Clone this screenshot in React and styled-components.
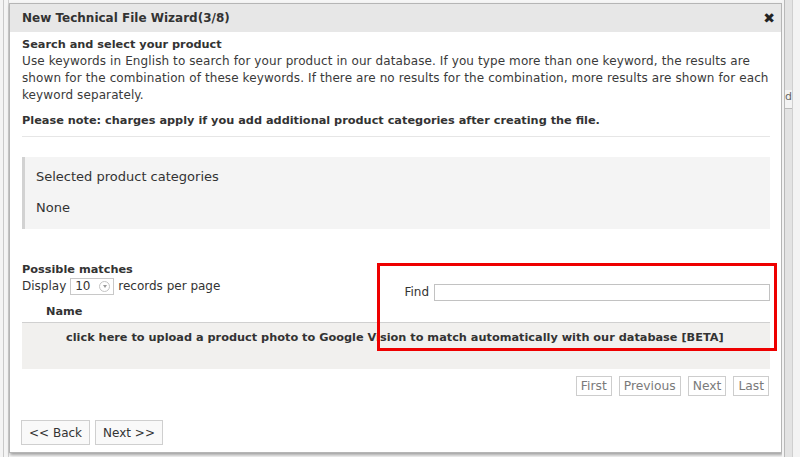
import React from "react";
import styled, { createGlobalStyle } from "styled-components";

const GlobalStyle = createGlobalStyle`
  html, body {
    margin: 0;
    padding: 0;
    background: #f5f5f5;
    font-family: "DejaVu Sans", Verdana, sans-serif;
    color: #333;
  }
`;

const Screen = styled.div`
  width: 800px;
  height: 457px;
  display: flex;
  overflow: hidden;
  background: #f6f6f6;
`;

const LeftEdge = styled.div`
  width: 9px;
  flex-shrink: 0;
  border-right: 1px solid #d0d0d0;
  box-sizing: border-box;
  background: linear-gradient(to right, #f4f4f4 0 3px, #c9c9c9 3px 4px, #f4f4f4 4px);
`;

const RightEdge = styled.div`
  flex: 1;
  display: flex;
  flex-direction: column;
  padding-left: 2px;
  background: #f3f3f3;
`;

const Track = styled.div`
  width: 7px;
  flex: 1;
  background: #e3e3e3;
  border-left: 1px solid #b9b9b9;
  border-right: 1px solid #cfcfcf;
  font-size: 11px;
  color: #666;
  display: flex;
  flex-direction: column;
  align-items: flex-start;
`;

const TrackLetter = styled.span`
  margin-top: 90px;
  padding-bottom: 5px;
  border-bottom: 1px solid #bbb;
  width: 100%;
  background: #f3f3f3;
`;

const Dialog = styled.div`
  width: 773px;
  height: 450px;
  margin-top: 3px;
  flex-shrink: 0;
  background: #fff;
  border: 1px solid #b5b5b5;
  box-sizing: border-box;
  box-shadow: 1px 2px 3px rgba(0, 0, 0, 0.35);
  display: flex;
  flex-direction: column;
`;

const TitleBar = styled.div`
  height: 28px;
  background: #e7e7e7;
  display: flex;
  align-items: center;
  justify-content: space-between;
  padding: 0 6px 0 12px;
  font-size: 12px;
  font-weight: bold;
  color: #333;
`;

const Close = styled.span`
  font-size: 14px;
  color: #222;
`;

const Body = styled.div`
  flex: 1;
  padding: 0 11px 0 12px;
  display: flex;
  flex-direction: column;
  font-size: 12px;
  line-height: 17px;
`;

const Heading = styled.div`
  font-weight: bold;
  font-size: 11.3px;
  margin-top: 4px;
`;

const Intro = styled.p`
  margin: 0 -14px 0 0;
  font-size: 12px;
  letter-spacing: 0.1px;
  color: #3a3a3a;
`;

const Note = styled.p`
  margin: 8px 0 0;
  font-weight: bold;
  font-size: 11.3px;
  padding-bottom: 7px;
  border-bottom: 1px solid #e6e6e6;
`;

const Panel = styled.div`
  margin-top: 20px;
  background: #f4f4f4;
  border-left: 3px solid #d2d2d2;
  padding: 11px 11px 13px;
  display: flex;
  flex-direction: column;
  gap: 14px;
  font-size: 13px;
  color: #333;
`;

const Matches = styled.div`
  margin-top: 32px;
  display: flex;
  align-items: flex-start;
`;

const LengthCol = styled.div`
  flex: 1;
  display: flex;
  flex-direction: column;
`;

const SubHeading = styled.div`
  font-weight: bold;
  font-size: 11.3px;
`;

const Display = styled.div`
  display: flex;
  align-items: center;
  gap: 4px;
`;

const Select = styled.span`
  width: 44px;
  height: 17px;
  box-sizing: border-box;
  border: 1px solid #c8c8c8;
  display: flex;
  align-items: center;
  justify-content: space-between;
  padding: 0 3px 0 4px;
  font-size: 12px;
`;

const Caret = styled.span`
  width: 11px;
  height: 11px;
  border-radius: 50%;
  border: 1px solid #c4c4c4;
  box-sizing: border-box;
  display: flex;
  align-items: center;
  justify-content: center;
  &::after {
    content: "";
    border-left: 2.5px solid transparent;
    border-right: 2.5px solid transparent;
    border-top: 3px solid #999;
  }
`;

const FindCol = styled.label`
  width: 367px;
  margin-top: 23px;
  display: flex;
  align-items: center;
  gap: 5px;
  padding-left: 4px;
  justify-content: flex-end;
`;

const FindInput = styled.input`
  width: 336px;
  height: 17px;
  box-sizing: border-box;
  border: 1px solid #c2c2c2;
  margin: 0;
`;

const Table = styled.div`
  margin-top: -2px;
  display: flex;
  flex-direction: column;
`;

const HeadRow = styled.div`
  font-weight: bold;
  font-size: 11.3px;
  padding: 4px 0 2px 24px;
  border-bottom: 1px solid #d0d0d0;
`;

const UploadRow = styled.div`
  background: #f1f0ee;
  height: 46px;
  padding: 6px 0 0 44px;
  box-sizing: border-box;
  font-weight: bold;
  font-size: 11.3px;
  color: #333;
`;

const Pager = styled.div`
  margin-top: 7px;
  display: flex;
  justify-content: flex-end;
  gap: 7px;
  padding-right: 1px;
`;

const PageButton = styled.span`
  border: 1px solid #cdcdcd;
  padding: 1px 4px;
  color: #7a7a7a;
  font-size: 12.3px;
  line-height: 16px;
  background: #fff;
`;

const Footer = styled.div`
  margin-top: 24px;
  display: flex;
  gap: 5px;
  margin-left: -1px;
`;

const FooterButton = styled.button`
  height: 25px;
  padding: 0 7px;
  border: 1px solid #cfcfcf;
  background: #f9f9f9;
  font-family: "DejaVu Sans", Verdana, sans-serif;
  font-size: 12px;
  color: #333;
  border-radius: 0;
`;

const Highlight = styled.div`
  position: absolute;
  left: 377px;
  top: 263px;
  width: 400px;
  height: 88px;
  box-sizing: border-box;
  border: 3px solid #ee0000;
  pointer-events: none;
`;

const Frame = styled.div`
  position: relative;
`;

export default function App() {
  return (
    <Frame>
      <GlobalStyle />
      <Screen>
        <LeftEdge />
        <Dialog>
          <TitleBar>
            New Technical File Wizard(3/8)
            <Close>✖</Close>
          </TitleBar>
          <Body>
            <Heading>Search and select your product</Heading>
            <Intro>
              Use keywords in English to search for your product in our database. If you type more than one keyword, the results are
              <br />
              shown for the combination of these keywords. If there are no results for the combination, more results are shown for each
              <br />
              keyword separately.
            </Intro>
            <Note>Please note: charges apply if you add additional product categories after creating the file.</Note>
            <Panel>
              <span>Selected product categories</span>
              <span>None</span>
            </Panel>
            <Matches>
              <LengthCol>
                <SubHeading>Possible matches</SubHeading>
                <Display>
                  Display
                  <Select>
                    10
                    <Caret />
                  </Select>
                  records per page
                </Display>
              </LengthCol>
              <FindCol>
                Find
                <FindInput type="text" />
              </FindCol>
            </Matches>
            <Table>
              <HeadRow>Name</HeadRow>
              <UploadRow>
                click here to upload a product photo to Google Vision to match automatically with our database [BETA]
              </UploadRow>
            </Table>
            <Pager>
              <PageButton>First</PageButton>
              <PageButton>Previous</PageButton>
              <PageButton>Next</PageButton>
              <PageButton>Last</PageButton>
            </Pager>
            <Footer>
              <FooterButton>&lt;&lt; Back</FooterButton>
              <FooterButton>Next &gt;&gt;</FooterButton>
            </Footer>
          </Body>
        </Dialog>
        <RightEdge>
          <Track>
            <TrackLetter>d</TrackLetter>
          </Track>
        </RightEdge>
      </Screen>
      <Highlight />
    </Frame>
  );
}
